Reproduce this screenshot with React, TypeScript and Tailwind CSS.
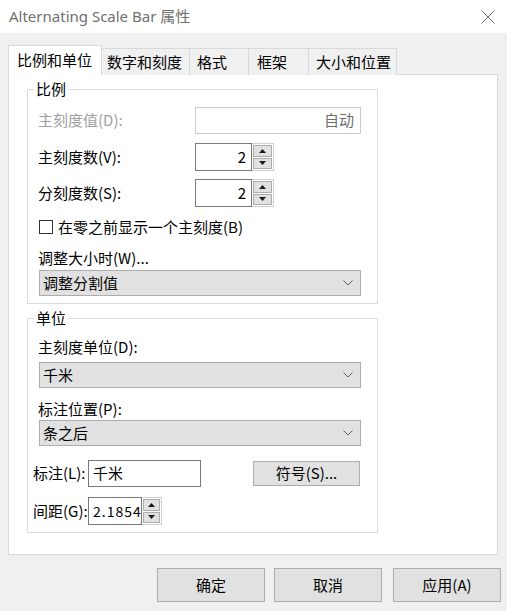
import type { ReactNode } from "react";

const cjk = "font-['Noto_Sans_CJK_SC','Noto_Sans',sans-serif]";

const tabs = [
  { label: "数字和刻度", w: "w-[88px]", pl: "pl-[5px]" },
  { label: "格式", w: "w-[59px]", pl: "pl-[7px]" },
  { label: "框架", w: "w-[60px]", pl: "pl-[8px]" },
  { label: "大小和位置", w: "w-[88px]", pl: "pl-[7px]" },
];

function Chevron() {
  return (
    <svg width="10" height="6" viewBox="0 0 10 6" className="shrink-0">
      <path d="M0.5 0.5 L5 5 L9.5 0.5" fill="none" stroke="#606060" strokeWidth="1" />
    </svg>
  );
}

function Triangle({ up }: { up?: boolean }) {
  return (
    <svg width="7" height="4" viewBox="0 0 7 4">
      <path d={up ? "M0 4 L3.5 0 L7 4 Z" : "M0 0 L3.5 4 L7 0 Z"} fill="#1a1a1a" />
    </svg>
  );
}

function SpinButtons({ w }: { w: string }) {
  return (
    <div className={`flex ${w} flex-col gap-[1px] border-y border-r border-[#cfcfcf] bg-white p-[1px]`}>
      <div className="flex flex-1 items-center justify-center border border-[#adadad] bg-[#e1e1e1]">
        <Triangle up />
      </div>
      <div className="flex flex-1 items-center justify-center border border-[#adadad] bg-[#e1e1e1]">
        <Triangle />
      </div>
    </div>
  );
}

function Combo({ value }: { value: string }) {
  return (
    <div className="ml-[1px] flex h-[26px] w-[322px] items-center justify-between border border-[#adadad] bg-[#e1e1e1] pl-[3px] pr-[7px]">
      <span>{value}</span>
      <Chevron />
    </div>
  );
}

function Row({ label, children, muted }: { label: string; children: ReactNode; muted?: boolean }) {
  return (
    <div className="flex h-full items-center">
      <span className={`w-[157px] ${muted ? "text-[#a0a0a0]" : ""}`}>{label}</span>
      {children}
    </div>
  );
}

function Group({ title, children, className = "" }: { title: string; children: ReactNode; className?: string }) {
  return (
    <fieldset className={`flex w-[351px] flex-col border border-[#dcdcdc] pb-[7px] pl-[10px] ${className}`}>
      <legend className="-ml-[4px] h-[20px] px-[2px] leading-[20px]">{title}</legend>
      {children}
    </fieldset>
  );
}

export default function App() {
  return (
    <div className={`flex h-[611px] w-[507px] flex-col bg-[#f0f0f0] text-[15px] text-black ${cjk}`}>
      {/* Title bar */}
      <div className="flex h-[33px] items-center justify-between bg-white pl-[9px] pr-[12px]">
        <span className="font-['Noto_Sans','Noto_Sans_CJK_SC',sans-serif] text-[15px] text-[#707070]">
          Alternating Scale Bar 属性
        </span>
        <svg width="14" height="14" viewBox="0 0 14 14">
          <path d="M0.5 0.5 L13.5 13.5 M13.5 0.5 L0.5 13.5" stroke="#6e6e6e" strokeWidth="1" />
        </svg>
      </div>

      <div className="pl-[8px]">
        {/* Tabs */}
        <div className="mt-[12px] flex h-[30px] items-end">
          <div className="relative z-10 flex h-[30px] w-[94px] items-center border-x border-t border-[#d9d9d9] bg-white pb-[1px] pl-[8px]">
            比例和单位
          </div>
          {tabs.map((t) => (
            <div
              key={t.label}
              className={`flex h-[27px] ${t.w} ${t.pl} items-center border-r border-t border-[#d9d9d9] bg-[#f0f0f0]`}
            >
              {t.label}
            </div>
          ))}
        </div>

        {/* Panel */}
        <div className="-mt-px flex h-[481px] w-[490px] flex-col border border-[#d9d9d9] bg-white pl-[18px] pt-[4px]">
          <Group title="比例">
            <div className="mt-[8px] h-[27px]">
              <Row label="主刻度值(D):" muted>
                <div className="flex h-[27px] w-[166px] items-center justify-end border border-[#cccccc] bg-white pr-[6px] text-[#6d6d6d]">
                  自动
                </div>
              </Row>
            </div>
            <div className="mt-[9px] h-[28px]">
              <Row label="主刻度数(V):">
                <div className="flex h-[28px]">
                  <div className="flex w-[57px] items-center justify-end border border-[#7a7a7a] bg-white pr-[5px]">2</div>
                  <SpinButtons w="w-[22px]" />
                </div>
              </Row>
            </div>
            <div className="mt-[8px] h-[28px]">
              <Row label="分刻度数(S):">
                <div className="flex h-[28px]">
                  <div className="flex w-[57px] items-center justify-end border border-[#7a7a7a] bg-white pr-[5px]">2</div>
                  <SpinButtons w="w-[22px]" />
                </div>
              </Row>
            </div>
            <div className="mt-[10px] flex h-[20px] items-center">
              <span className="ml-[1px] h-[14px] w-[14px] border border-[#333333] bg-white" />
              <span className="ml-[5px]">在零之前显示一个主刻度(B)</span>
            </div>
            <div className="mt-[11px] flex h-[20px] items-center">调整大小时(W)...</div>
            <div className="mt-[2px]">
              <Combo value="调整分割值" />
            </div>
          </Group>

          <Group title="单位" className="mt-[4px]">
            <div className="mt-[9px] flex h-[20px] items-center">主刻度单位(D):</div>
            <div className="mt-[5px]">
              <Combo value="千米" />
            </div>
            <div className="mt-[11px] flex h-[20px] items-center">标注位置(P):</div>
            <div className="mt-[1px]">
              <Combo value="条之后" />
            </div>
            <div className="-ml-[5px] mt-[14px] flex h-[27px] items-center">
              <span className="w-[55px]">标注(L):</span>
              <div className="flex h-[27px] w-[113px] items-center border border-[#7a7a7a] bg-white pl-[4px]">千米</div>
              <div className="ml-[52px] flex h-[25px] w-[107px] items-center justify-center border border-[#adadad] bg-[#e1e1e1]">
                符号(S)...
              </div>
            </div>
            <div className="-ml-[5px] mt-[10px] flex h-[28px] items-center">
              <span className="w-[55px]">间距(G):</span>
              <div className="flex h-[28px]">
                <div className="flex w-[54px] items-center overflow-hidden whitespace-nowrap border border-[#7a7a7a] bg-white pl-[4px] text-[14px] tracking-[1px]">
                  2.18541
                </div>
                <SpinButtons w="w-[20px]" />
              </div>
            </div>
          </Group>
        </div>
      </div>

      {/* Buttons */}
      <div className="mt-[13px] flex pl-[157px]">
        <div className="flex h-[34px] w-[108px] items-center justify-center border border-[#adadad] bg-[#e1e1e1]">确定</div>
        <div className="ml-[9px] flex h-[34px] w-[108px] items-center justify-center border border-[#adadad] bg-[#e1e1e1]">取消</div>
        <div className="ml-[11px] flex h-[34px] w-[108px] items-center justify-center border border-[#adadad] bg-[#e1e1e1]">应用(A)</div>
      </div>
    </div>
  );
}
